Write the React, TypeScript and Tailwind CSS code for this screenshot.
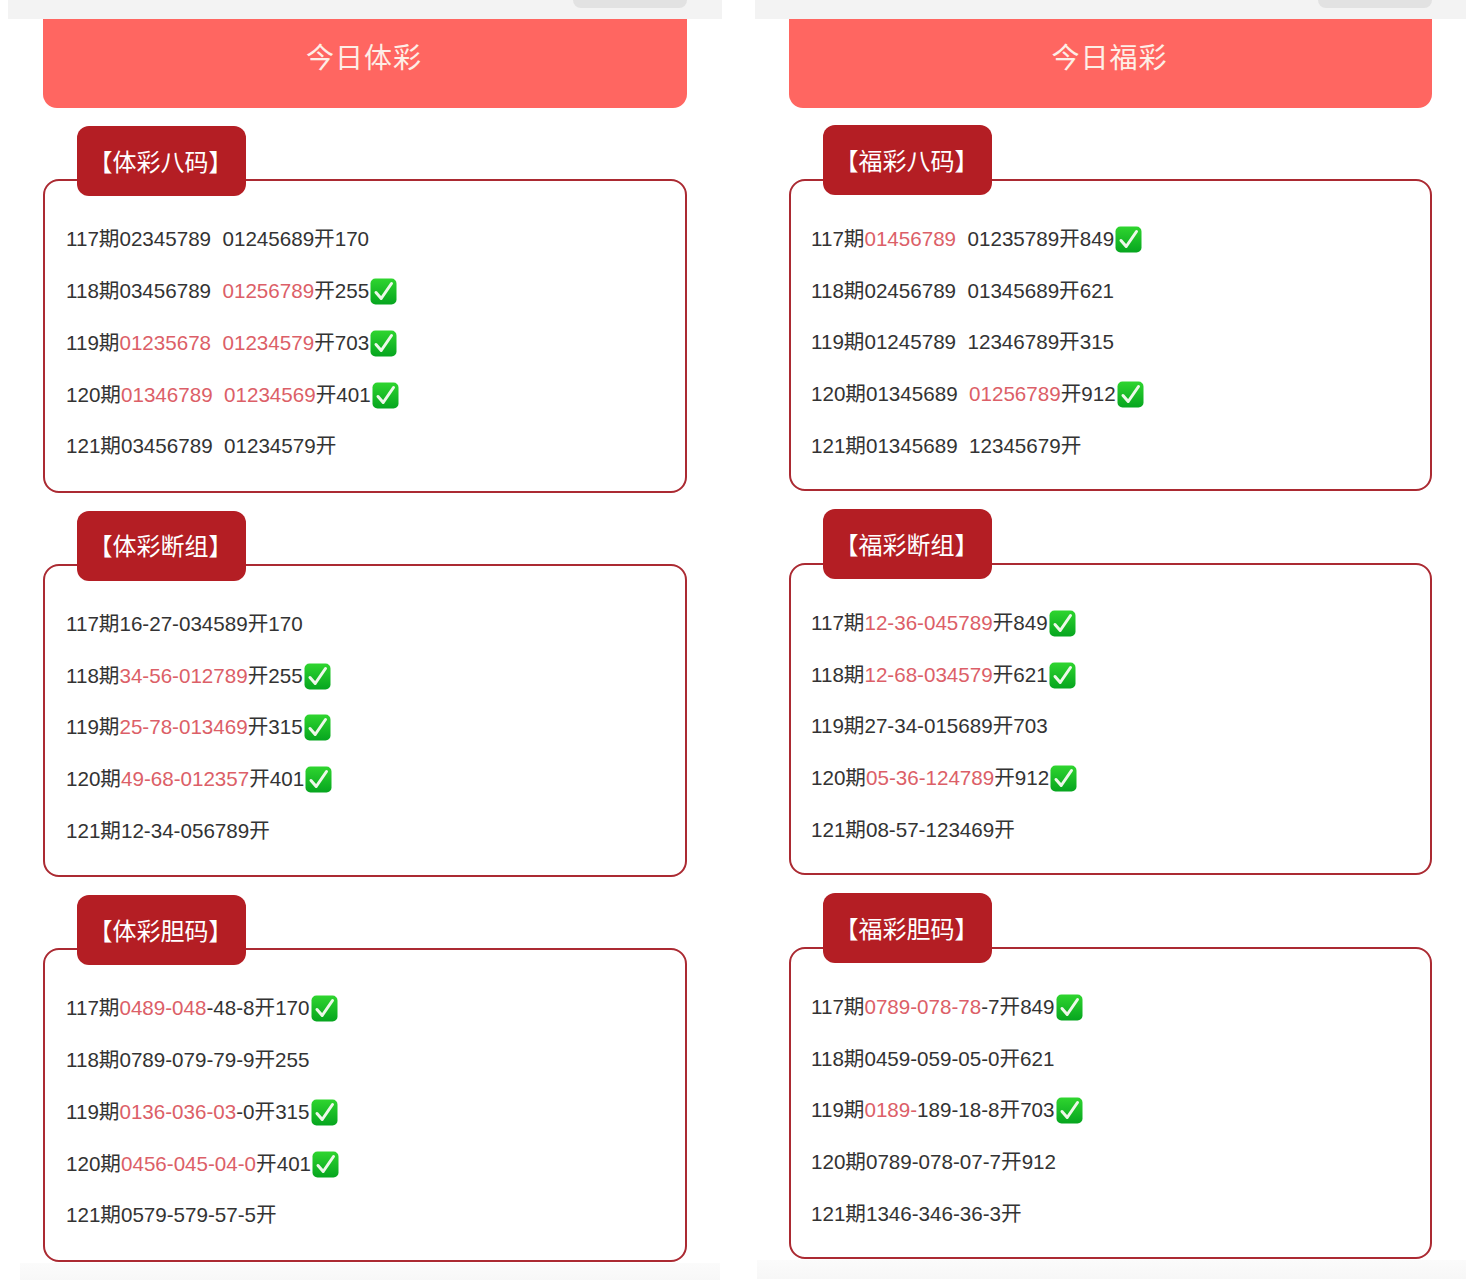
const CheckBadge = () => (
  <svg viewBox="0 0 27 27" className="ml-[1px] w-[27px] h-[27px] shrink-0">
    <defs>
      <linearGradient id="badge" x1="0" y1="0" x2="0" y2="1">
        <stop offset="0" stopColor="#2fd52f" />
        <stop offset="1" stopColor="#06a51f" />
      </linearGradient>
    </defs>
    <rect x="0.5" y="0.5" width="26" height="26" rx="5" fill="url(#badge)" />
    <path d="M6 14.5l5.2 6L21.5 5.5" fill="none" stroke="#eef8ea" strokeWidth="3" strokeLinecap="round" strokeLinejoin="round" />
  </svg>
);

type Row = { text: string; ok?: boolean };
type Section = { title: string; rows: Row[] };

// red parts of a row sit between * marks
const Line = ({ text, ok }: Row) => (
  <div className="h-[51.75px] flex items-center whitespace-pre text-[20.6px] text-[#333333]">
    {text.split("*").map((part, i) => (
      <span key={i} className={i % 2 === 1 ? "text-[#dc5f68]" : ""}>
        {part}
      </span>
    ))}
    {ok && <CheckBadge />}
  </div>
);

const Block = ({ section, cardClass }: { section: Section; cardClass: string }) => (
  <div>
    <div className="relative z-10 ml-[34px] w-[169px] h-[70px] pt-[3px] pr-[2px] rounded-[12px] bg-[#b41e24] flex items-center justify-center text-[24px] text-white">
      {section.title}
    </div>
    <div className={"border-2 border-[#ab2a32] rounded-[16px] " + cardClass}>
      {section.rows.map((row, i) => (
        <Line key={i} {...row} />
      ))}
    </div>
  </div>
);

const Column = ({
  title,
  sections,
  className,
  inset,
  cardClass,
  firstGap,
  pillClass,
  bandClass,
}: {
  title: string;
  sections: Section[];
  className: string;
  inset: string;
  cardClass: string;
  firstGap: string;
  pillClass: string;
  bandClass: string;
}) => (
  <div className={className}>
    <div className="h-[19px] bg-[#f3f3f3] flex justify-end">
      <div className={"w-[114px] h-[8px] rounded-b-[8px] bg-[#e2e2e2] " + pillClass} />
    </div>
    <div className={inset}>
      <div className="h-[89px] pb-[10px] pr-[2px] rounded-b-[14px] bg-[#ff6661] flex items-center justify-center text-[28px] tracking-[1px] text-[#fdeee6]">
        {title}
      </div>
      <div className={"flex flex-col gap-[18px] " + firstGap}>
        {sections.map((s) => (
          <Block key={s.title} section={s} cardClass={cardClass} />
        ))}
      </div>
    </div>
    <div className={"h-[19px] mt-[1px] bg-gradient-to-b from-[#fbfbfb] to-[#f7f7f7] " + bandClass} />
  </div>
);

const tiCai: Section[] = [
  {
    title: "【体彩八码】",
    rows: [
      { text: "117期02345789  01245689开170" },
      { text: "118期03456789  *01256789*开255", ok: true },
      { text: "119期*01235678  01234579*开703", ok: true },
      { text: "120期*01346789  01234569*开401", ok: true },
      { text: "121期03456789  01234579开" },
    ],
  },
  {
    title: "【体彩断组】",
    rows: [
      { text: "117期16-27-034589开170" },
      { text: "118期*34-56-012789*开255", ok: true },
      { text: "119期*25-78-013469*开315", ok: true },
      { text: "120期*49-68-012357*开401", ok: true },
      { text: "121期12-34-056789开" },
    ],
  },
  {
    title: "【体彩胆码】",
    rows: [
      { text: "117期*0489-048*-48-8开170", ok: true },
      { text: "118期0789-079-79-9开255" },
      { text: "119期*0136-036-03*-0开315", ok: true },
      { text: "120期*0456-045-04-0*开401", ok: true },
      { text: "121期0579-579-57-5开" },
    ],
  },
];

const fuCai: Section[] = [
  {
    title: "【福彩八码】",
    rows: [
      { text: "117期*01456789*  01235789开849", ok: true },
      { text: "118期02456789  01345689开621" },
      { text: "119期01245789  12346789开315" },
      { text: "120期01345689  *01256789*开912", ok: true },
      { text: "121期01345689  12345679开" },
    ],
  },
  {
    title: "【福彩断组】",
    rows: [
      { text: "117期*12-36-045789*开849", ok: true },
      { text: "118期*12-68-034579*开621", ok: true },
      { text: "119期27-34-015689开703" },
      { text: "120期*05-36-124789*开912", ok: true },
      { text: "121期08-57-123469开" },
    ],
  },
  {
    title: "【福彩胆码】",
    rows: [
      { text: "117期*0789-078-78*-7开849", ok: true },
      { text: "118期0459-059-05-0开621" },
      { text: "119期*0189-*189-18-8开703", ok: true },
      { text: "120期0789-078-07-7开912" },
      { text: "121期1346-346-36-3开" },
    ],
  },
];

export default function App() {
  return (
    <div className="h-[1280px] overflow-hidden bg-white flex font-['Liberation_Sans','Noto_Sans_CJK_SC',sans-serif]">
      <Column
        title="今日体彩"
        sections={tiCai}
        className="ml-[8px] w-[714px]"
        inset="mx-[35px]"
        cardClass="-mt-[17px] h-[313.5px] pl-[21px] pt-[33px]"
        firstGap="mt-[18px]"
        pillClass="mr-[35px]"
        bandClass="ml-[12px] mr-[2px]"
      />
      <Column
        title="今日福彩"
        sections={fuCai}
        className="ml-[33px] w-[711px]"
        inset="ml-[34px] mr-[34px]"
        cardClass="-mt-[16px] h-[312px] pl-[20px] pt-[32.5px]"
        firstGap="mt-[17px]"
        pillClass="mr-[34px]"
        bandClass="ml-[2px]"
      />
    </div>
  );
}
